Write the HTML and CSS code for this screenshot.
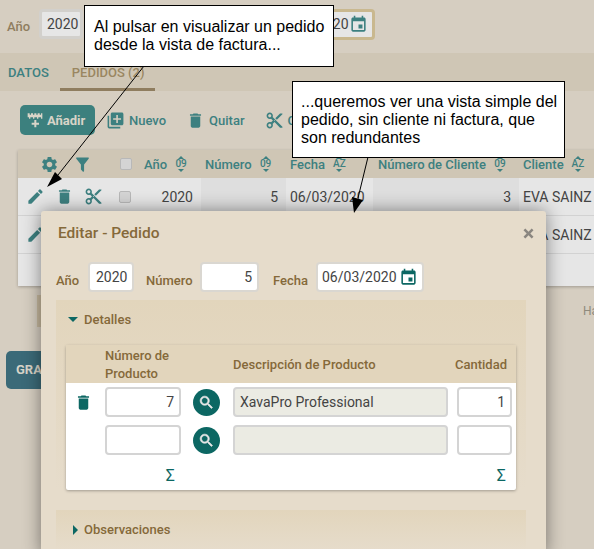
FILE: index.html
```html
<!DOCTYPE html>
<html lang="es">
<head>
<meta charset="utf-8">
<title>Editar - Pedido</title>
<link rel="stylesheet" href="styles.css">
</head>
<body>
<div class="page">
  <div class="topform">
    <span class="lbl">Año</span><span class="inp w44">2020</span>
    <span class="lbl gap">Número</span><span class="inp w59 right">5</span>
    <span class="lbl gap fe">Fecha</span>
    <span class="inp date focus">06/03/2020<svg class="ico cal" viewBox="0 0 24 24"><path d="M17 12h-5v5h5v-5zM16 1v2H8V1H6v2H5c-1.11 0-1.99.9-1.99 2L3 19c0 1.1.89 2 2 2h14c1.1 0 2-.9 2-2V5c0-1.1-.9-2-2-2h-1V1h-2zm3 18H5V8h14v11z"/></svg></span>
  </div>
  <div class="tabs">
    <span class="tab first">DATOS</span>
    <span class="tab active">PEDIDOS (2)</span>
  </div>
  <div class="toolbar">
    <span class="btn primary"><svg class="ico add" viewBox="0 0 24 24"><path d="M1 2h3v2H1zM6 2h3v2H6zM11 2h3v2h-3zM16 2h3v2h-3zM21 2h2v2h-2zM1 4h22v4H1zM3 8h2v2H3zM9 8h2v2H9zM15 8h2v2h-2zM21 8h2v2h-2zM11 12h3v4h4v3h-4v4h-3v-4H7v-3h4z"/></svg>Añadir</span>
    <span class="btn"><svg class="ico" viewBox="0 0 24 24"><path d="M4 6H2v14c0 1.1.9 2 2 2h14v-2H4V6zm16-4H8c-1.1 0-2 .9-2 2v12c0 1.1.9 2 2 2h12c1.1 0 2-.9 2-2V4c0-1.1-.9-2-2-2zm-1 9h-4v4h-2v-4H9V9h4V5h2v4h4v2z"/></svg>Nuevo</span>
    <span class="btn"><svg class="ico" viewBox="0 0 24 24"><path d="M6 19c0 1.1.9 2 2 2h8c1.1 0 2-.9 2-2V7H6v12zM19 4h-3.5l-1-1h-5l-1 1H5v2h14V4z"/></svg>Quitar</span>
    <span class="btn"><svg class="ico" viewBox="0 0 24 24"><path d="M9.64 7.64c.23-.5.36-1.05.36-1.64 0-2.21-1.79-4-4-4S2 3.79 2 6s1.79 4 4 4c.59 0 1.14-.13 1.64-.36L10 12l-2.36 2.36C7.14 14.13 6.59 14 6 14c-2.21 0-4 1.79-4 4s1.79 4 4 4 4-1.79 4-4c0-.59-.13-1.14-.36-1.64L12 14l7 7h3v-1L9.64 7.64zM6 8c-1.1 0-2-.89-2-2s.9-2 2-2 2 .89 2 2-.9 2-2 2zm0 12c-1.1 0-2-.89-2-2s.9-2 2-2 2 .89 2 2-.9 2-2 2zm6-7.5c-.28 0-.5-.22-.5-.5s.22-.5.5-.5.5.22.5.5-.22.5-.5.5zM19 3l-6 6 2 2 7-7V3h-3z"/></svg>Cortar</span>
  </div>
  <div class="list">
    <div class="lrow lhead">
      <div class="hactions">
        <svg class="ico" viewBox="0 0 24 24"><path d="M19.14 12.94c.04-.3.06-.61.06-.94 0-.32-.02-.64-.07-.94l2.03-1.58c.18-.14.23-.41.12-.61l-1.92-3.32c-.12-.22-.37-.29-.59-.22l-2.39.96c-.5-.38-1.03-.7-1.62-.94l-.36-2.54c-.04-.24-.24-.41-.48-.41h-3.84c-.24 0-.43.17-.47.41l-.36 2.54c-.59.24-1.13.57-1.62.94l-2.39-.96c-.22-.08-.47 0-.59.22L2.74 8.87c-.12.21-.08.47.12.61l2.03 1.58c-.05.3-.09.63-.09.94s.02.64.07.94l-2.03 1.58c-.18.14-.23.41-.12.61l1.92 3.32c.12.22.37.29.59.22l2.39-.96c.5.38 1.03.7 1.62.94l.36 2.54c.05.24.24.41.48.41h3.84c.24 0 .44-.17.47-.41l.36-2.54c.59-.24 1.13-.56 1.62-.94l2.39.96c.22.08.47 0 .59-.22l1.92-3.32c.12-.22.07-.47-.12-.61l-2.01-1.58zM12 15.6c-1.98 0-3.6-1.62-3.6-3.6s1.62-3.6 3.6-3.6 3.6 1.62 3.6 3.6-1.62 3.6-3.6 3.6z"/></svg>
        <svg class="ico" viewBox="0 0 24 24"><path d="M14 12v7.88c.04.3-.06.62-.29.83a1 1 0 0 1-1.41 0l-2.01-2.01a.99.99 0 0 1-.29-.83V12h-.03L4.21 4.62a1 1 0 0 1 .17-1.4c.19-.14.4-.22.62-.22h14c.22 0 .43.08.62.22a1 1 0 0 1 .17 1.4L14.03 12H14z"/></svg>
        <span class="check hcheck"></span>
      </div>
      <div class="hc p3">Año<span class="sort">09</span></div>
      <div class="hc p4">Número<span class="sort">09</span></div>
      <div class="hc p4">Fecha<span class="sort">AZ</span></div>
      <div class="hc p5">Número de Cliente<span class="sort">09</span></div>
      <div class="hc p4">Cliente<span class="sort">AZ</span></div>
    </div>
    <div class="lrow body">
      <div class="ractions">
        <svg class="ico" viewBox="0 0 24 24"><path d="M3 17.25V21h3.75L17.81 9.94l-3.75-3.75L3 17.25zM20.71 7.04a1 1 0 0 0 0-1.41l-2.34-2.34a1 1 0 0 0-1.41 0l-1.83 1.83 3.75 3.75 1.83-1.83z"/></svg>
        <svg class="ico" viewBox="0 0 24 24"><path d="M6 19c0 1.1.9 2 2 2h8c1.1 0 2-.9 2-2V7H6v12zM19 4h-3.5l-1-1h-5l-1 1H5v2h14V4z"/></svg>
        <svg class="ico" viewBox="0 0 24 24"><path d="M9.64 7.64c.23-.5.36-1.05.36-1.64 0-2.21-1.79-4-4-4S2 3.79 2 6s1.79 4 4 4c.59 0 1.14-.13 1.64-.36L10 12l-2.36 2.36C7.14 14.13 6.59 14 6 14c-2.21 0-4 1.79-4 4s1.79 4 4 4 4-1.79 4-4c0-.59-.13-1.14-.36-1.64L12 14l7 7h3v-1L9.64 7.64zM6 8c-1.1 0-2-.89-2-2s.9-2 2-2 2 .89 2 2-.9 2-2 2zm0 12c-1.1 0-2-.89-2-2s.9-2 2-2 2 .89 2 2-.9 2-2 2zm6-7.5c-.28 0-.5-.22-.5-.5s.22-.5.5-.5.5.22.5.5-.22.5-.5.5zM19 3l-6 6 2 2 7-7V3h-3z"/></svg>
        <span class="check"></span>
      </div>
      <div class="c num">2020</div><div class="c num alt">5</div><div class="c txt">06/03/2020</div><div class="c num alt">3</div><div class="c txt">EVA SAINZ</div>
    </div>
    <div class="lrow body">
      <div class="ractions">
        <svg class="ico" viewBox="0 0 24 24"><path d="M3 17.25V21h3.75L17.81 9.94l-3.75-3.75L3 17.25zM20.71 7.04a1 1 0 0 0 0-1.41l-2.34-2.34a1 1 0 0 0-1.41 0l-1.83 1.83 3.75 3.75 1.83-1.83z"/></svg>
        <svg class="ico" viewBox="0 0 24 24"><path d="M6 19c0 1.1.9 2 2 2h8c1.1 0 2-.9 2-2V7H6v12zM19 4h-3.5l-1-1h-5l-1 1H5v2h14V4z"/></svg>
      </div>
      <div class="c num">2020</div><div class="c num alt">6</div><div class="c txt">06/03/2020</div><div class="c num alt">3</div><div class="c txt">EVA SAINZ</div>
    </div>
    <div class="lrow empty"></div>
  </div>
  <div class="pager">
    <span class="pagebox"></span>
    <span class="pagetext">Hay 2 registros</span>
  </div>
  <div class="save">GRABAR</div>

  <div class="dialog">
    <div class="dtitle"><span>Editar - Pedido</span><svg class="close" viewBox="0 0 24 24"><path d="M20 6.91 17.09 4 12 9.09 6.91 4 4 6.91 9.09 12 4 17.09 6.91 20 12 14.91 17.09 20 20 17.09 14.91 12 20 6.91z"/></svg></div>
    <div class="dform">
      <span class="dlbl l1">Año</span><span class="dinp w46">2020</span>
      <span class="dlbl l2">Número</span><span class="dinp w59 right">5</span>
      <span class="dlbl l3">Fecha</span>
      <span class="dinp date">06/03/2020<svg class="ico cal" viewBox="0 0 24 24"><path d="M17 12h-5v5h5v-5zM16 1v2H8V1H6v2H5c-1.11 0-1.99.9-1.99 2L3 19c0 1.1.89 2 2 2h14c1.1 0 2-.9 2-2V5c0-1.1-.9-2-2-2h-1V1h-2zm3 18H5V8h14v11z"/></svg></span>
    </div>
    <div class="section">
      <div class="shead"><span class="tri down"></span>Detalles</div>
      <div class="grid">
        <div class="ghead"><span></span><span>Número de Producto</span><span></span><span>Descripción de Producto</span><span class="qh">Cantidad</span></div>
        <div class="grow first">
          <svg class="ico gtrash" viewBox="0 0 24 24"><path d="M6 19c0 1.1.9 2 2 2h8c1.1 0 2-.9 2-2V7H6v12zM19 4h-3.5l-1-1h-5l-1 1H5v2h14V4z"/></svg>
          <span class="ginp right">7</span>
          <span class="search"><svg viewBox="0 0 24 24"><path d="M15.5 14h-.79l-.28-.27A6.47 6.47 0 0 0 16 9.5 6.5 6.5 0 1 0 9.5 16c1.61 0 3.09-.59 4.23-1.57l.27.28v.79l5 4.99L20.49 19l-4.99-5zm-6 0C7.01 14 5 11.99 5 9.5S7.01 5 9.5 5 14 7.01 14 9.5 11.99 14 9.5 14z"/></svg></span>
          <span class="ginp ro">XavaPro Professional</span>
          <span class="ginp qty right">1</span>
        </div>
        <div class="grow">
          <span></span>
          <span class="ginp"></span>
          <span class="search"><svg viewBox="0 0 24 24"><path d="M15.5 14h-.79l-.28-.27A6.47 6.47 0 0 0 16 9.5 6.5 6.5 0 1 0 9.5 16c1.61 0 3.09-.59 4.23-1.57l.27.28v.79l5 4.99L20.49 19l-4.99-5zm-6 0C7.01 14 5 11.99 5 9.5S7.01 5 9.5 5 14 7.01 14 9.5 11.99 14 9.5 14z"/></svg></span>
          <span class="ginp ro"></span>
          <span class="ginp qty"></span>
        </div>
        <div class="gfoot"><span></span><span class="sum">Σ</span><span></span><span></span><span class="sum sumq">Σ</span></div>
      </div>
    </div>
    <div class="section obs">
      <div class="shead"><span class="tri rightt"></span>Observaciones</div>
    </div>
  </div>

  <div class="note n1">Al pulsar en visualizar un pedido desde la vista de factura...</div>
  <div class="note n2">...queremos ver una vista simple del pedido, sin cliente ni factura, que son redundantes</div>
  <svg class="arrows" viewBox="0 0 594 549">
    <line x1="144" y1="66" x2="58" y2="175"/>
    <polygon points="47,187 55,172 62,179"/>
    <line x1="368" y1="157" x2="358" y2="198"/>
    <polygon points="354,213 352,197 363,200"/>
  </svg>
</div>
</body>
</html>
```
FILE: styles.css
```css
* { box-sizing: border-box; }
html, body { margin: 0; padding: 0; }
body { font-family: Roboto, "Liberation Sans", sans-serif; }
.page { position: relative; width: 594px; height: 549px; overflow: hidden; background: #d6cec1; }
.ico { width: 19px; height: 19px; fill: #3d8080; flex: none; display: block; }

.topform { height: 53px; display: flex; align-items: center; padding: 0 0 5px 7px; }
.lbl { font-size: 13px; font-weight: 500; color: #8f7d5f; margin: 4px 7px 0 0; width: 25px; flex: none; white-space: nowrap; }
.lbl.gap { margin-left: 12px; width: 47px; margin-right: 8px; }
.lbl.gap.fe { width: 38px; }
.inp { height: 30px; border: 3px solid #d2d0cc; border-radius: 4px; background: #e6e6e6; color: #444; font-size: 14px; line-height: 24px; padding: 0 5px; white-space: nowrap; flex: none; }
.w44 { width: 44px; }
.w46 { width: 46px; }
.w59 { width: 59px; }
.right { text-align: right; }
.inp.date, .dinp.date { width: 108px; display: flex; align-items: center; justify-content: space-between; padding: 0 4px; }
.inp.focus { border-color: #c9b88f; height: 31px; }

.tabs { height: 38px; background: #cfc6b5; display: flex; font-size: 13px; font-weight: 500; white-space: nowrap; }
.tab { padding: 12px 11px 0; color: #3d8080; height: 38px; }
.tab.first { padding-left: 8px; }
.tab.active { color: #9a8661; border-bottom: 3px solid #8f7d5f; padding: 12px 0 0 12px; width: 95px; }

.toolbar { display: flex; align-items: center; height: 30px; margin: 14px 0 15px 20px; font-size: 13px; font-weight: 500; color: #3d8080; }
.btn { display: flex; align-items: center; gap: 4px; height: 30px; margin-right: 20px; white-space: nowrap; }
.btn.primary { width: 75px; background: #3c807e; color: #d8d4c8; border-radius: 5px; padding-left: 7px; margin-right: 11px; font-weight: 700; }
.ico.add { fill: #d8d4c8; width: 16px; height: 16px; }

.list { margin-left: 18px; width: 640px; height: 136px; background: #e6e6e6; box-shadow: 0 1px 3px rgba(0,0,0,.25); }
.lrow { display: grid; grid-template-columns: 123px 60px 85px 87px 146px 139px; }
.lhead { height: 28px; background: #cfc6b5; color: #3d8080; font-size: 13px; font-weight: 500; align-items: center; }
.hactions { display: flex; align-items: center; gap: 14px; padding-left: 22px; }
.hactions .hcheck { margin-left: 14px; }
.hc { display: flex; align-items: center; white-space: nowrap; gap: 8px; }
.p3 { padding-left: 3px; }
.p4 { padding-left: 4px; }
.p5 { padding-left: 5px; }
.sort { font-size: 10px; color: #3d8080; width: 12px; text-align: center; line-height: 10px; position: relative; }
.sort::before, .sort::after { content: ""; position: absolute; left: 3px; border-left: 3px solid transparent; border-right: 3px solid transparent; }
.sort::before { top: -3px; border-bottom: 3px solid #3d8080; }
.sort::after { bottom: -3px; border-top: 3px solid #3d8080; }
.body { height: 38px; border-bottom: 1px solid #d2d2d2; color: #444; font-size: 14px; }
.ractions { display: flex; align-items: center; gap: 10px; padding-left: 8px; }
.ractions .check { margin-left: 6px; }
.check { width: 12px; height: 12px; background: #d4d4d4; border: 1px solid #b8b8b8; border-radius: 2px; flex: none; }
.c { display: flex; align-items: center; white-space: nowrap; }
.num { justify-content: flex-end; padding-right: 8px; }
.txt { padding-left: 4px; }
.alt { background: #dedede; }
.lrow.empty { height: 32px; }

.pager { display: flex; align-items: center; height: 32px; margin-top: 9px; padding-left: 37px; font-size: 12px; color: #8f8a7d; }
.pagebox { width: 100px; height: 32px; background: #c7b99f; flex: none; }
.pagetext { margin-left: 446px; white-space: nowrap; flex: none; }
.save { margin: 24px 0 0 6px; width: 90px; height: 38px; background: #3b6a78; border-radius: 5px; color: #d8d4c8; font-size: 13px; font-weight: 700; line-height: 38px; padding-left: 10px; }

.dialog { position: absolute; left: 41px; top: 211px; width: 505px; height: 345px; background: #e6dccb; border-radius: 3px; box-shadow: 0 0 18px rgba(0,0,0,.45); padding: 11px 20px 0 15px; }
.dtitle { display: flex; justify-content: space-between; align-items: center; height: 22px; font-size: 15.5px; font-weight: 500; color: #85693a; padding-left: 2px; margin-right: -10px; }
.close { width: 15px; height: 15px; fill: #8a8680; }
.dform { display: flex; align-items: center; height: 30px; margin-top: 18px; }
.dlbl { font-size: 13px; font-weight: 500; color: #85693a; margin-top: 6px; white-space: nowrap; flex: none; }
.l1 { width: 24px; margin-right: 8px; }
.l2 { width: 46px; margin-left: 12px; margin-right: 8px; }
.l3 { width: 36px; margin-left: 14px; margin-right: 7px; }
.dinp { height: 30px; border: 2px solid #dad7d1; border-radius: 4px; background: #fff; color: #444; font-size: 14px; line-height: 26px; padding: 0 5px 0 6px; white-space: nowrap; flex: none; }
.dinp .cal { fill: #0c6763; }
.section { margin-top: 8px; width: 470px; padding: 0 10px; background: linear-gradient(#e2d5bc, #e6dccb); }
.shead { height: 45px; display: flex; align-items: flex-start; padding: 11px 0 0 2px; font-size: 13px; font-weight: 500; color: #85693a; line-height: 18px; }
.tri { width: 0; height: 0; margin-right: 6px; flex: none; }
.tri.down { border-left: 5px solid transparent; border-right: 5px solid transparent; border-top: 5px solid #0c6763; margin-top: 6px; }
.tri.rightt { border-top: 5px solid transparent; border-bottom: 5px solid transparent; border-left: 5px solid #0c6763; margin: 4px 6px 0 5px; }

.grid { width: 450px; height: 145px; background: #fff; border-radius: 2px; box-shadow: 0 1px 3px rgba(0,0,0,.3); }
.ghead, .grow, .gfoot { display: grid; grid-template-columns: 39px 76px 52px 215px 68px; align-items: center; }
.ghead { height: 38px; padding-top: 2px; background: #e2d5bc; font-size: 13px; font-weight: 500; color: #85693a; line-height: 18px; }
.qh { margin-left: 7px; white-space: nowrap; }
.grow { height: 30px; margin-top: 8px; }
.grow.first { margin-top: 4px; }
.gtrash { fill: #0c6763; margin-left: 8px; }
.ginp { height: 30px; border: 2px solid #d4d4d4; border-radius: 4px; background: #fff; color: #444; font-size: 14px; line-height: 26px; padding: 0 5px; white-space: nowrap; }
.ginp.ro { background: #ebebe3; }
.ginp.qty { margin-left: 9px; width: 55px; }
.search { width: 27px; height: 27px; border-radius: 50%; background: #0c6763; margin-left: 12px; display: flex; align-items: center; justify-content: center; }
.search svg { width: 17px; height: 17px; fill: #e8e8e8; stroke: #e8e8e8; stroke-width: .9; }
.gfoot { height: 20px; margin-top: 11px; }
.sum { font-size: 16px; color: #0c6763; text-align: right; padding-right: 6px; line-height: 20px; }
.sumq { padding-right: 10px; }
.section.obs { margin-top: 20px; height: 40px; }

.note { position: absolute; background: #fff; border: 1px solid #000; color: #000; font-family: "Liberation Sans", Arial, sans-serif; font-size: 16px; line-height: 18px; }
.n1 { left: 84px; top: 5px; width: 250px; height: 62px; padding: 12px 6px 0 9px; }
.n2 { left: 292px; top: 81px; width: 273px; height: 77px; padding: 11px 6px 0 8px; }
.arrows { position: absolute; left: 0; top: 0; width: 594px; height: 549px; pointer-events: none; }
.arrows line { stroke: #000; stroke-width: 1; }
.arrows polygon { fill: #000; }
```
